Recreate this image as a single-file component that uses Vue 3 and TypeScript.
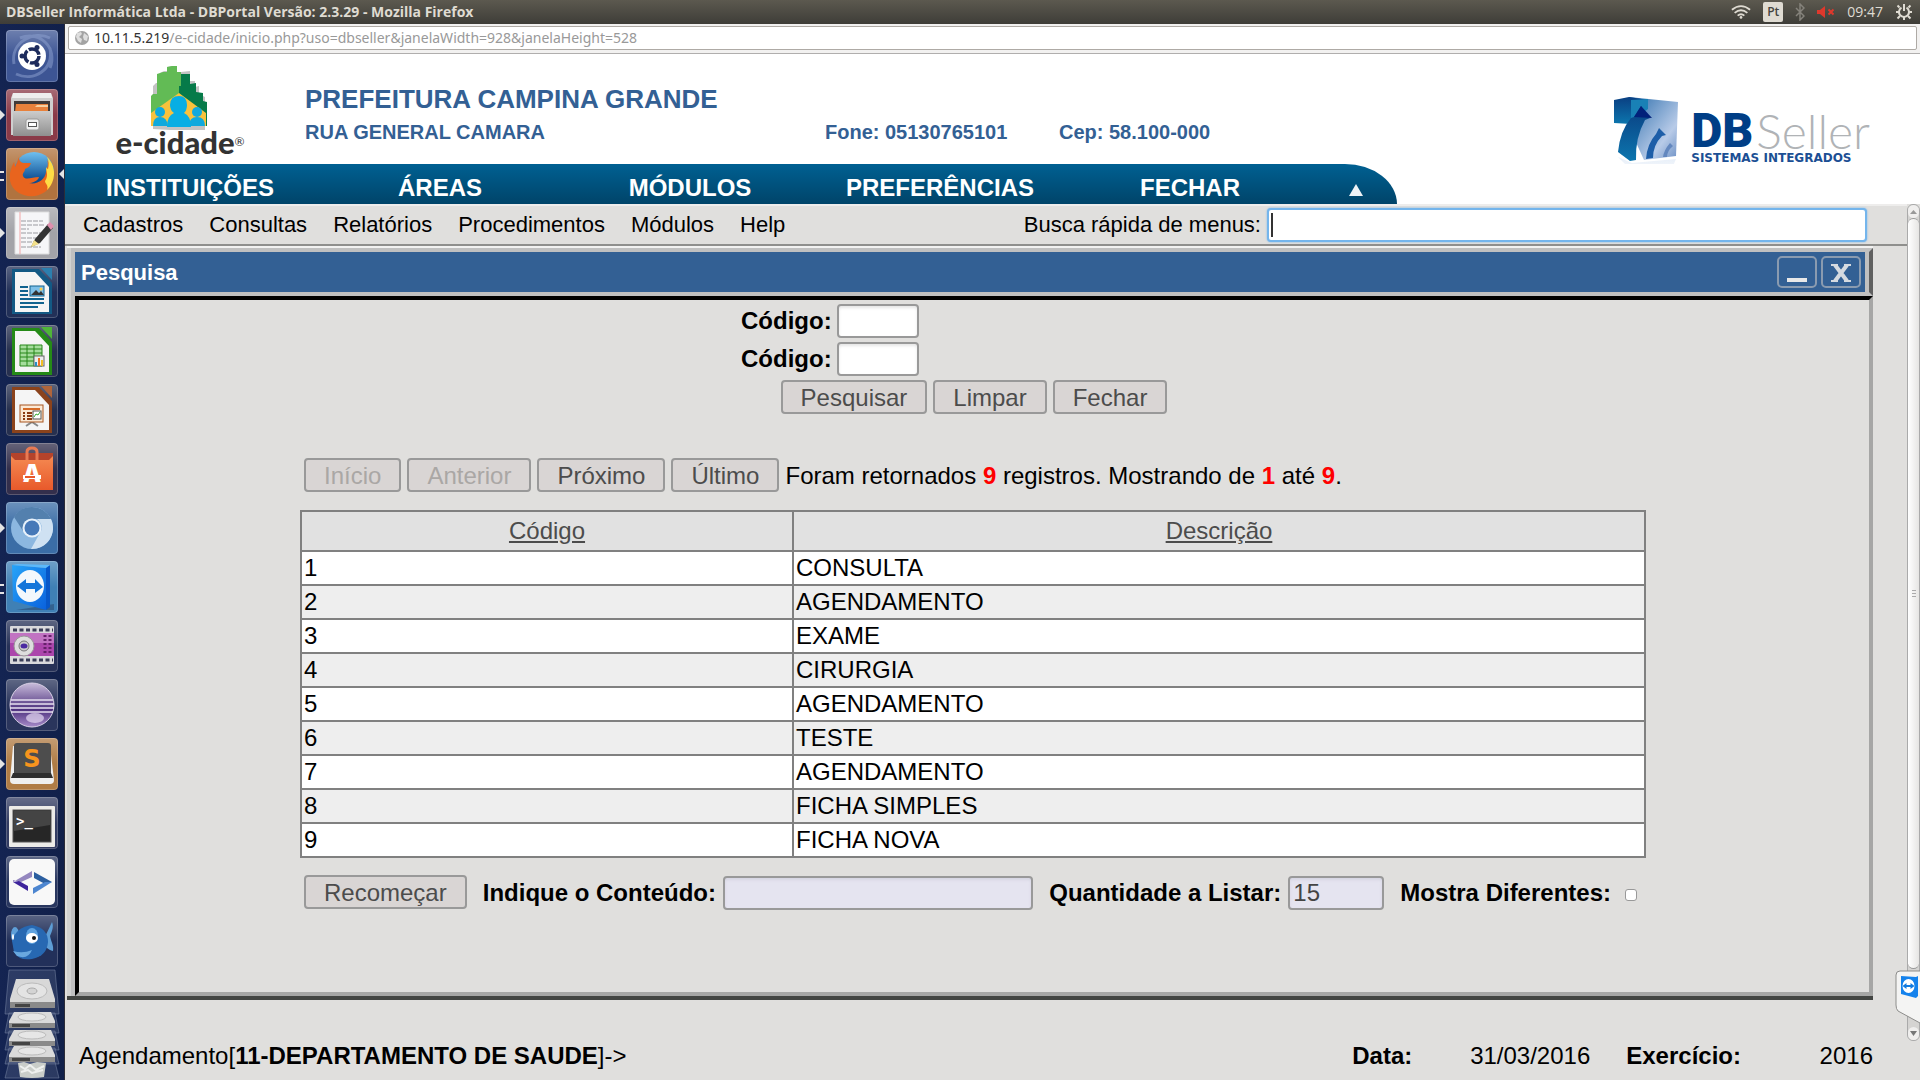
<script setup lang="ts">
import { nextTick, onMounted, ref } from 'vue'

interface Registro {
  codigo: number
  descricao: string
}

interface AppIcon {
  id: string
  label: string
  background: string
  windows: number
  active?: boolean
}

const areas: string[] = ['INSTITUIÇÕES', 'ÁREAS', 'MÓDULOS', 'PREFERÊNCIAS', 'FECHAR']
const menus: string[] = ['Cadastros', 'Consultas', 'Relatórios', 'Procedimentos', 'Módulos', 'Help']

const registros: Registro[] = [
  { codigo: 1, descricao: 'CONSULTA' },
  { codigo: 2, descricao: 'AGENDAMENTO' },
  { codigo: 3, descricao: 'EXAME' },
  { codigo: 4, descricao: 'CIRURGIA' },
  { codigo: 5, descricao: 'AGENDAMENTO' },
  { codigo: 6, descricao: 'TESTE' },
  { codigo: 7, descricao: 'AGENDAMENTO' },
  { codigo: 8, descricao: 'FICHA SIMPLES' },
  { codigo: 9, descricao: 'FICHA NOVA' },
]

const apps: AppIcon[] = [
  { id: 'dash', label: 'Início', background: '#3d5594', windows: 0 },
  { id: 'files', label: 'Arquivos', background: '#8a3a48', windows: 1 },
  { id: 'firefox', label: 'Firefox', background: '#b0733f', windows: 2, active: true },
  { id: 'gedit', label: 'Editor de texto', background: '#a3a3a8', windows: 1 },
  { id: 'writer', label: 'Writer', background: '#223058', windows: 0 },
  { id: 'calc', label: 'Calc', background: '#27304f', windows: 0 },
  { id: 'impress', label: 'Impress', background: '#27304f', windows: 0 },
  { id: 'software', label: 'Central de programas', background: '#332f4c', windows: 0 },
  { id: 'chromium', label: 'Chromium', background: '#3b6da6', windows: 1 },
  { id: 'teamviewer', label: 'TeamViewer', background: '#3f80b5', windows: 2 },
  { id: 'video', label: 'Gravador', background: '#273258', windows: 0 },
  { id: 'eclipse', label: 'Eclipse', background: '#2a355c', windows: 0 },
  { id: 'sublime', label: 'Sublime', background: '#b07c45', windows: 1 },
  { id: 'terminal', label: 'Terminal', background: '#333c62', windows: 0 },
  { id: 'code', label: 'Editor', background: '#28365f', windows: 0 },
  { id: 'fish', label: 'Bluefish', background: '#22305a', windows: 0 },
]

const busca = ref('')
const conteudo = ref('')
const quantidade = ref('15')
const diferentes = ref(false)
const campoBusca = ref<HTMLInputElement | null>(null)

onMounted(async () => {
  await nextTick()
  campoBusca.value?.focus()
})
</script>

<template>
  <div class="desktop">
    <header class="panel">
      <span class="panel-title">DBSeller Informática Ltda - DBPortal Versão: 2.3.29 - Mozilla Firefox</span>
      <div class="indicators">
        <svg width="20" height="16" viewBox="0 0 22 16" fill="none" stroke="#dfdbd2" stroke-width="2">
          <path d="M1 5.500Q11-2.500 21 5.500M4 9Q11 3 18 9M7.300 12Q11 9 14.700 12" />
          <circle cx="11" cy="14" r="1.500" fill="#dfdbd2" stroke="none" />
        </svg>
        <span class="keyboard">Pt</span>
        <svg width="10" height="18" viewBox="0 0 10 18" fill="none" stroke="#85827b" stroke-width="1.500">
          <path d="M1 5l8 8-4 4V1l4 4-8 8" />
        </svg>
        <svg width="18" height="14" viewBox="0 0 18 14">
          <path d="M0 5h3l5-4v12L3 9H0z" fill="#df382c" />
          <path d="M11.500 4.500l5 5m0-5l-5 5" stroke="#df382c" stroke-width="2" />
        </svg>
        <span class="clock">09:47</span>
        <svg width="18" height="18" viewBox="0 0 18 18" fill="none" stroke="#dfdbd2" stroke-width="2">
          <path d="M6.500 4.600a5 5 0 1 0 5 0" />
          <path d="M9 1v7" />
          <path d="M4.500 4.500l-2-2M13.500 4.500l2-2M4 9H1M14 9h3M5 13l-2.500 2.500M13 13l2.500 2.500M9 14v3" />
        </svg>
      </div>
    </header>

    <div class="screen">
      <nav class="launcher" aria-label="Lançador">
        <button
          v-for="app in apps"
          :key="app.id"
          type="button"
          class="tile"
          :class="{ one: app.windows === 1, two: app.windows === 2 }"
          :style="{ backgroundColor: app.background }"
          :aria-label="app.label"
        >
          <svg v-if="app.id === 'dash'" viewBox="0 0 52 52">
            <path d="M8 34C4 12 28 0 44 8M14 8C34 0 52 18 44 38M44 18C48 40 28 52 10 44" fill="none" stroke="#8fa3d2" stroke-width="3" opacity=".5" />
            <circle cx="26" cy="26" r="14" fill="#fff" />
            <circle cx="26" cy="26" r="7" fill="none" stroke="#1d2b5c" stroke-width="3.500" stroke-dasharray="13 1.700" />
            <circle cx="16" cy="26" r="2.500" fill="#1d2b5c" /><circle cx="31" cy="17.500" r="2.500" fill="#1d2b5c" /><circle cx="31" cy="34.500" r="2.500" fill="#1d2b5c" />
          </svg>
          <svg v-else-if="app.id === 'files'" viewBox="0 0 52 52">
            <path d="M7 4h38l2 5v37H5V9z" fill="#cfcfcf" /><path d="M7 4h38l1 5H6z" fill="#eee" />
            <path d="M8 12h36v11H8z" fill="#403a38" /><path d="M10 15h32v8H9z" fill="#e8813b" /><path d="M9 18h20l2-2h11v2H9z" fill="#f7d0a0" />
            <path d="M7 22h38v25H7z" fill="url(#metal)" /><rect x="20" y="30" width="13" height="11" rx="2" fill="#eee" stroke="#999" />
            <rect x="22.500" y="33.500" width="8" height="4" fill="#fff" stroke="#555" />
          </svg>
          <svg v-else-if="app.id === 'firefox'" viewBox="0 0 52 52">
            <circle cx="28" cy="24" r="20" fill="url(#globe)" />
            <path d="M41 12c9 10 8 25-2 32-12 8-29 4-34-8C2 28 5 20 8 14l1 5 4-10c0 4 2 6 6 6h6c-1 4-4 5-6 6 0 3-3 4-2 7 2 5 9 1 16 1-1 4-7 6-10 6 8 2 16-3 17-11 1-4 3-8 1-12z" fill="#e8641e" />
            <path d="M41 9c10 9 9 25 0 33 2-5-2-6-2-9 4-6 1-9 1-14 1 2 2 2 2 2 1-4 1-8-1-12z" fill="#ffdc45" />
          </svg>
          <svg v-else-if="app.id === 'gedit'" viewBox="0 0 52 52">
            <path d="M9 5h34v42H9z" fill="#f6f6f8" stroke="#ddd" /><path d="M14 5v42" stroke="#f2a6a6" />
            <path d="M15 14h22M15 18h24M15 22h8M15 26h20M15 31h20M15 35h14M15 40h20" stroke="#9a9aa0" stroke-dasharray="5 1" />
            <path d="M25 40l4-8 13-15 5 4-13 15z" fill="#333" /><path d="M25 40l3-7 5 4z" fill="#f3e08a" /><path d="M41 18l3-3 4 4-3 4z" fill="#df8fae" />
          </svg>
          <svg v-else-if="app.id === 'writer'" viewBox="0 0 52 52">
            <path d="M35 2h11v12z" fill="#2c7fae" /><path d="M6 3h27l13 14v31H6z" fill="#135984" /><path d="M9 6h20l14 15v25H9z" fill="#f5f5f5" />
            <path d="M14 21h8M14 25h8M14 29h8M14 33h24M14 37h24M14 41h18" stroke="#11638f" stroke-width="2" />
            <rect x="24" y="20" width="14" height="10" fill="#7ec0e8" stroke="#11638f" /><path d="M25 29l5-5 3 3 2-2 3 4z" fill="#333" /><circle cx="35" cy="23" r="1.500" fill="#fc4" />
          </svg>
          <svg v-else-if="app.id === 'calc'" viewBox="0 0 52 52">
            <path d="M35 2h11v12z" fill="#4fb538" /><path d="M6 3h27l13 14v33H6z" fill="#258a17" /><path d="M9 6h20l14 15v26H9z" fill="#f5f5f5" />
            <path d="M14 20h22v21H14z" fill="#a5dd9c" /><path d="M14 20h22v21H14zM14 24h22M14 28h22M14 32h22M14 36h22M21 20v21M28 20v21" fill="none" stroke="#268718" />
            <rect x="28" y="31" width="10" height="10" fill="#eee" stroke="#666" /><path d="M29 37h2v4h-2z" fill="#2b8dc4" /><path d="M32 33h2v8h-2z" fill="#ee7026" /><path d="M35 35h2v6h-2z" fill="#f2bf25" />
          </svg>
          <svg v-else-if="app.id === 'impress'" viewBox="0 0 52 52">
            <path d="M35 2h11v12z" fill="#b0653b" /><path d="M6 3h27l13 14v32H6z" fill="#8b431c" /><path d="M9 6h20l14 15v25H9z" fill="#f5f5f5" />
            <path d="M20 42l6-4 6 4" fill="none" stroke="#888" stroke-width="2" /><rect x="14" y="21" width="23" height="17" fill="#fbe9d5" stroke="#a8551f" />
            <path d="M17 25h17" stroke="#d66b27" stroke-width="2" /><path d="M17 29h2m2 0h5M17 32h2m2 0h5M17 35h2m2 0h5" stroke="#8b3b12" stroke-width="2" />
            <rect x="27" y="27" width="8" height="8" fill="#fff" stroke="#555" /><path d="M28 33l2-3 2 1 2-3" fill="none" stroke="#3a3" />
          </svg>
          <svg v-else-if="app.id === 'software'" viewBox="0 0 52 52">
            <path d="M5 10h42v8H5z" fill="#b5432b" /><path d="M5 13l4 4h34l4-4v34H5z" fill="url(#bag)" />
            <path d="M21 17V9q0-4 5-4t5 4v8" fill="none" stroke="#e87a54" stroke-width="3" />
            <text x="26" y="39" text-anchor="middle" font-family="Open Sans, sans-serif" font-weight="800" font-size="24" fill="#fff">A</text>
            <path d="M17 34h18" stroke="#fff" stroke-width="4" /><path d="M19 34h10" stroke="#e8592b" stroke-width="2" />
          </svg>
          <svg v-else-if="app.id === 'chromium'" viewBox="0 0 52 52">
            <circle cx="26" cy="26" r="21" fill="#8cb7e0" /><path d="M26 5a21 21 0 0 1 19 12H26c-8 0-10 7-9 12L8 15A21 21 0 0 1 26 5z" fill="#5380ae" />
            <path d="M45 17a21 21 0 0 1-20 30l10-18c2-4 0-9-4-12z" fill="#cfe1f2" /><circle cx="26" cy="26" r="9.500" fill="#e8f1fa" /><circle cx="26" cy="26" r="7.500" fill="#4779b8" />
          </svg>
          <svg v-else-if="app.id === 'teamviewer'" viewBox="0 0 52 52">
            <path d="M10 49h38v-6z" fill="#235" opacity=".4" /><path d="M40 6l4-2v42l-4 3z" fill="#0757c8" /><path d="M6 4l34 3v42L7 40z" fill="url(#team)" /><path d="M6 4l5-1 33 1-4 3z" fill="#5cb9fa" />
            <ellipse cx="24" cy="25" rx="14" ry="16" fill="#f3f8fc" /><path d="M11 25l9-7v4h9v-4l8 8-8 6v-4h-9v4z" fill="#1476da" />
          </svg>
          <svg v-else-if="app.id === 'video'" viewBox="0 0 52 52">
            <rect x="4" y="6" width="44" height="38" rx="1" fill="#d9d9dc" /><path d="M4 13h44v23H4z" fill="#ac46ac" /><path d="M4 13h44v10H4z" fill="#c173c2" />
            <path d="M7 10h40M7 40h40" stroke="#3a3e58" stroke-width="3" stroke-dasharray="4 2.500" />
            <path d="M39 15v20M44 15v20" stroke="#66206a" stroke-width="3" stroke-dasharray="2 2" />
            <circle cx="18" cy="26" r="10" fill="#ddd" stroke="#999" /><circle cx="18" cy="26" r="5" fill="#ccc" stroke="#777" /><ellipse cx="18" cy="26" rx="3.500" ry="2.500" fill="#4a2aa0" />
          </svg>
          <svg v-else-if="app.id === 'eclipse'" viewBox="0 0 52 52">
            <circle cx="26" cy="26" r="22" fill="url(#orb)" stroke="#d9d0e6" />
            <path d="M5 21h42M4 25h44M4 29h44M5 33h42" stroke="#e6dff0" stroke-width="1.500" /><ellipse cx="29" cy="39" rx="9" ry="5" fill="#e5daf2" opacity=".7" />
          </svg>
          <svg v-else-if="app.id === 'sublime'" viewBox="0 0 52 52">
            <path d="M7 8h37l4 34q0 4-4 4H8q-4 0-4-4z" fill="#efefef" /><rect x="8" y="5" width="37" height="35" rx="3" fill="#4d4d4d" /><path d="M7 35h38l2 5H5z" fill="#2e2e2e" />
            <text x="26" y="29" text-anchor="middle" font-family="DejaVu Sans, sans-serif" font-weight="700" font-size="24" fill="#f7941d">S</text>
          </svg>
          <svg v-else-if="app.id === 'terminal'" viewBox="0 0 52 52">
            <rect x="3" y="9" width="46" height="41" rx="1" fill="#ecebe8" /><rect x="7" y="13" width="38" height="32" fill="#262626" stroke="#555" /><path d="M8 14h36v14L8 34z" fill="#444" />
            <text x="10" y="29" font-family="DejaVu Sans Mono, monospace" font-weight="700" font-size="14" fill="#fff">&gt;_</text>
          </svg>
          <svg v-else-if="app.id === 'code'" viewBox="0 0 52 52">
            <rect x="3" y="3" width="46" height="46" rx="5" fill="#f8f8f8" /><path d="M26 15v6l-11 5-8-2v2z" fill="#9487bf" /><path d="M7 26l15 9v-5l-9-5z" fill="#3e249c" />
            <path d="M28 16l18 10-7 2-11-6z" fill="#2c5fa0" /><path d="M46 26L27 38v-6l12-6z" fill="#4d86d0" />
          </svg>
          <svg v-else viewBox="0 0 52 52">
            <path d="M38 24l8-17c2 5 0 9-2 14 1 6 4 9 3 15-5-1-8-5-11-8z" fill="#5d9dd5" /><ellipse cx="9" cy="20" rx="4" ry="8" fill="#5e9fd8" />
            <path d="M6 26q4-14 20-16 16 3 16 17-1 14-16 17-13 2-18-7z" fill="#2768b2" /><path d="M7 36q10 3 19-1-4 10-15 6z" fill="#69a8df" />
            <ellipse cx="26" cy="21" rx="6" ry="8" fill="#5fa2df" /><ellipse cx="26" cy="23" rx="6" ry="5" fill="#fff" /><circle cx="28" cy="23" r="2" fill="#111" /><ellipse cx="7" cy="22" rx="1" ry="3" fill="#fff" />
          </svg>
          <span v-if="app.active" class="active-mark"></span>
        </button>
        <svg class="stack" viewBox="0 0 65 111">
          <g fill="#5d6b8d" fill-opacity=".35" stroke="#7c89a8" stroke-opacity=".5">
            <path d="M9 1h46l4 44H5z" /><path d="M9 44h46l4 20H5z" /><path d="M9 62h46l4 19H5z" /><path d="M9 79h46l4 16H5z" /><path d="M9 93h46l4 16H5z" />
          </g>
          <path d="M16 10h33l6 20v4H10v-4z" fill="#d8d8d8" /><path d="M10 33h45v6H10z" fill="#8a8a8a" /><path d="M15 35h15v3H15z" fill="#444" />
          <ellipse cx="32" cy="22" rx="15" ry="8" fill="#e4e4e4" stroke="#bbb" /><ellipse cx="32" cy="22" rx="5" ry="3" fill="#d4d4d4" stroke="#aaa" />
          <g v-for="y in [43, 61, 77]" :key="y" :transform="`translate(0 ${y})`">
            <path d="M14 0h37l4 9v2H9V9z" fill="#dadada" /><path d="M9 11h46v5H9z" fill="#8a8a8a" /><path d="M12 12h18v3H12z" fill="#444" />
            <ellipse cx="32" cy="5" rx="14" ry="4" fill="#e6e6e6" stroke="#bbb" />
          </g>
          <path d="M18 94l6-1 6 2 7-2 9 1-2 14q-12 2-24 0z" fill="#c9cdc9" />
          <path d="M20 97l5 3 5-4 6 5 8-4M21 103l7-2 4 3 11-3" fill="none" stroke="#eef0ee" stroke-width="2" />
        </svg>
        <svg class="defs" aria-hidden="true">
          <defs>
            <linearGradient id="metal" x2="0" y2="1"><stop stop-color="#ccc" /><stop offset="1" stop-color="#8f8f8f" /></linearGradient>
            <linearGradient id="globe" x2="0" y2="1"><stop stop-color="#6fc0f0" /><stop offset=".7" stop-color="#0c4d92" /></linearGradient>
            <linearGradient id="bag" x2="0" y2="1"><stop stop-color="#f58a52" /><stop offset="1" stop-color="#e8592b" /></linearGradient>
            <linearGradient id="team" x2="1" y2="1"><stop stop-color="#27a4f8" /><stop offset="1" stop-color="#0a62dd" /></linearGradient>
            <linearGradient id="orb" x2="0" y2="1"><stop stop-color="#c9bddb" /><stop offset=".6" stop-color="#4c2f7d" /><stop offset="1" stop-color="#a78cc9" /></linearGradient>
            <linearGradient id="cube" x2="1" y2="1"><stop stop-color="#2a6cab" /><stop offset=".7" stop-color="#b8cbe8" /><stop offset="1" stop-color="#6b8fc4" /></linearGradient>
            <linearGradient id="edge" x2="0" y2="1"><stop stop-color="#0a3f82" /><stop offset="1" stop-color="#0c76ae" /></linearGradient>
            <linearGradient id="reflex" x2="0" y2="1"><stop stop-color="#dce7f5" /><stop offset="1" stop-color="#fff" /></linearGradient>
          </defs>
        </svg>
      </nav>

      <div class="browser">
        <div class="addressbar">
          <div class="address">
            <svg width="16" height="16" viewBox="0 0 16 16">
              <circle cx="8" cy="8" r="7" fill="#a3a3a3" />
              <path d="M3 3l4-1 1 2-3 3 3 2-1 4-3-2-2-4zM10 3l4 3-1 5-3-1-1-3z" fill="#dedede" />
            </svg>
            <span><span class="host">10.11.5.219</span>/e-cidade/inicio.php?uso=dbseller&amp;janelaWidth=928&amp;janelaHeight=528</span>
          </div>
        </div>

        <div class="banner">
          <div class="ecidade">
            <svg width="60" height="64" viewBox="0 0 60 64">
              <path d="M3 63V20l3-3h4V7l4-2h3V1l5-1h4v4l2 10 3-8 9-1v10h5v6l4-1v8l6 3v35z" fill="#888" opacity=".5" />
              <path d="M1 60V30l2-2h4V8l6-2h4V1l5-1h5v6h4v54z" fill="#62bb55" />
              <path d="M29 60V20h2V8h9v10l6-1v9l7 1v8l4 1v24z" fill="#067a49" />
              <path d="M1 60V47l28-20 27 20v13z" fill="#f9c23c" />
              <g fill="#0fa9dd"><circle cx="10" cy="46" r="5" /><path d="M3 60q0-9 7-9t8 9z" /><circle cx="47" cy="46" r="5" /><path d="M39 60q0-9 8-9t8 9z" /></g>
              <path d="M17 61q0-11 7-14-4-3-4-8 0-9 9-9 8 0 8 9 0 5-3 8 7 3 7 14z" fill="#08aee4" />
            </svg>
            <div class="ecidade-name">e-cidade<sup>®</sup></div>
          </div>
          <div class="entity">
            <div class="entity-name">PREFEITURA CAMPINA GRANDE</div>
            <div class="entity-data">
              <span class="street">RUA GENERAL CAMARA</span>
              <span class="phone">Fone: 05130765101</span>
              <span>Cep: 58.100-000</span>
            </div>
          </div>
          <div class="dbseller">
            <svg width="66" height="84" viewBox="0 0 66 84">
              <path d="M4 60l14 6 44-4-6 14-30 6z" fill="url(#reflex)" opacity=".7" />
              <path d="M15 0l49 5-2 54-32 4L15 30z" fill="url(#cube)" />
              <path d="M0 3l15-3 19 3-17 5v19L0 26z" fill="url(#edge)" /><path d="M17 3l17-1v10l-11 8-6 6z" fill="#1981b6" />
              <path d="M27 9l9 12-5 2q-10 18-9 40l-6 1-12-9Q6 34 17 21l3-1z" fill="url(#edge)" />
              <path d="M27 9l11 12-18-1z" fill="#02217a" />
              <path d="M45 31l7 7-4 1q-9 9-9 22l-7 1q1-15 10-25z" fill="#1e5ea8" /><path d="M56 46l3 3q-6 5-6 11h-4q1-7 7-14z" fill="#6387be" />
            </svg>
            <div class="dbseller-name">
              <div class="wordmark"><b>DB</b><span>Seller</span></div>
              <div class="tagline">SISTEMAS INTEGRADOS</div>
            </div>
          </div>
        </div>

        <nav class="areas">
          <div class="areas-bar">
            <a v-for="area in areas" :key="area" href="#">{{ area }}</a>
            <button type="button" class="collapse" aria-label="Recolher">
              <svg width="14" height="12" viewBox="0 0 14 12"><path d="M7 0l7 12H0z" fill="#eef3f6" /></svg>
            </button>
          </div>
        </nav>

        <div class="workspace">
          <div class="page">
            <div class="menubar">
              <nav class="menus"><a v-for="menu in menus" :key="menu" href="#">{{ menu }}</a></nav>
              <label class="quick-label" for="busca">Busca rápida de menus:</label>
              <div class="quick">
                <input id="busca" ref="campoBusca" v-model="busca" type="text" autocomplete="off" />
                <span v-if="!busca" class="caret"></span>
              </div>
            </div>

            <section class="window">
              <header class="titlebar">
                <h1>Pesquisa</h1>
                <button type="button" aria-label="Minimizar">
                  <svg width="40" height="32" viewBox="0 0 40 32"><rect x="1" y="1" width="38" height="30" rx="4" fill="none" stroke="#8a9bb0" stroke-width="2" /><path d="M10 24h20" stroke="#e8e8e8" stroke-width="4" /></svg>
                </button>
                <button type="button" aria-label="Fechar janela">
                  <svg width="40" height="32" viewBox="0 0 40 32"><rect x="1" y="1" width="38" height="30" rx="4" fill="none" stroke="#8a9bb0" stroke-width="2" /><path d="M14 9l12 16M26 9L14 25" stroke="#d5dae0" stroke-width="4" /><path d="M10 9h7M23 9h7M10 25h7M23 25h7" stroke="#d5dae0" stroke-width="2" /></svg>
                </button>
              </header>
              <div class="content">
                <form class="filters" @submit.prevent>
                  <div class="field"><label for="codigo1">Código:</label><input id="codigo1" type="text" /></div>
                  <div class="field"><label for="codigo2">Código:</label><input id="codigo2" type="text" /></div>
                  <div class="actions">
                    <button type="submit" class="btn">Pesquisar</button>
                    <button type="reset" class="btn">Limpar</button>
                    <button type="button" class="btn">Fechar</button>
                  </div>
                </form>

                <div class="results">
                  <div class="pager">
                    <button type="button" class="btn" disabled>Início</button>
                    <button type="button" class="btn" disabled>Anterior</button>
                    <button type="button" class="btn">Próximo</button>
                    <button type="button" class="btn">Último</button>
                    <span class="summary">Foram retornados <b>9</b> registros. Mostrando de <b>1</b> até <b>9</b>.</span>
                  </div>
                  <table>
                    <colgroup><col class="col-code" /><col /></colgroup>
                    <thead>
                      <tr><th scope="col"><a href="#">Código</a></th><th scope="col"><a href="#">Descrição</a></th></tr>
                    </thead>
                    <tbody>
                      <tr v-for="r in registros" :key="r.codigo"><td>{{ r.codigo }}</td><td>{{ r.descricao }}</td></tr>
                    </tbody>
                  </table>
                  <div class="listing">
                    <button type="button" class="btn">Recomeçar</button>
                    <div class="option grow"><label for="conteudo">Indique o Conteúdo:</label><input id="conteudo" v-model="conteudo" type="text" /></div>
                    <div class="option"><label for="quantidade">Quantidade a Listar:</label><input id="quantidade" v-model="quantidade" class="amount" type="text" /></div>
                    <div class="option"><label for="diferentes">Mostra Diferentes:</label><input id="diferentes" v-model="diferentes" type="checkbox" /></div>
                  </div>
                </div>
              </div>
            </section>

            <footer class="status">
              <span class="path">Agendamento[<b>11-DEPARTAMENTO DE SAUDE</b>]-&gt;</span>
              <b>Data:</b><span class="date">31/03/2016</span>
              <b>Exercício:</b><span class="year">2016</span>
            </footer>
          </div>

          <div class="rail" aria-hidden="true">
            <div class="rail-end"><svg width="7" height="4" viewBox="0 0 7 4"><path d="M0 4l3.500-4L7 4z" fill="#999" /></svg></div>
            <div class="thumb"><i></i><i></i><i></i></div>
            <div class="rail-track"></div>
            <div class="rail-end"><svg width="7" height="5" viewBox="0 0 7 5"><path d="M0 0h7L3.500 5z" fill="#777" /></svg></div>
          </div>
          <svg class="tag" width="25" height="54" viewBox="0 0 25 54">
            <path d="M25 1H5Q1 1 1 5v30q0 4 2 6l22 12" fill="#f4f4f3" stroke="#8d8d8b" />
            <path d="M6 6l15 1 2-1v20l-2 2-15-4z" fill="#1482ec" /><ellipse cx="13.500" cy="16" rx="6" ry="7" fill="#fff" /><path d="M7.500 16l4-3v2h4v-2l4 3-4 3v-2h-4v2z" fill="#137be0" />
          </svg>
        </div>
      </div>
    </div>
  </div>
</template>

<style>
body {
  margin: 0;
  background: #e0dfdd;
}
</style>

<style scoped>
* {
  box-sizing: border-box;
}
.desktop {
  display: flex;
  flex-direction: column;
  height: 100vh;
  overflow: hidden;
  color: #000;
  font: 24px/28px 'Liberation Sans', Arial, sans-serif;
}
a {
  color: inherit;
  text-decoration: none;
}
button {
  padding: 0;
  border: 0;
  background: none;
  font: inherit;
}
svg {
  display: block;
  flex: none;
}
.panel {
  flex: none;
  display: flex;
  align-items: center;
  justify-content: space-between;
  height: 24px;
  padding: 0 7px 0 6px;
  background: linear-gradient(#5c594f, #3e3d38);
  color: #dfdbd2;
  font: 14px/24px 'Open Sans', 'Noto Sans', sans-serif;
}
.panel-title {
  font-weight: 700;
}
.indicators {
  display: flex;
  align-items: center;
  gap: 12px;
}
.keyboard {
  width: 20px;
  border-radius: 2px;
  background: #dfdbd2;
  color: #45443e;
  font-size: 12px;
  font-weight: 600;
  line-height: 20px;
  text-align: center;
}
.screen {
  flex: 1;
  display: flex;
  min-height: 0;
}
.launcher {
  flex: none;
  display: flex;
  flex-direction: column;
  align-items: center;
  gap: 7px;
  width: 65px;
  padding-top: 6px;
  overflow: hidden;
  border-right: 1px solid #2c2c38;
  background: linear-gradient(90deg, #142452, #11204a);
}
.tile {
  position: relative;
  flex: none;
  width: 52px;
  height: 52px;
  border-radius: 4px;
  background-image: linear-gradient(rgba(255, 255, 255, 0.25), rgba(255, 255, 255, 0) 50%);
  box-shadow: inset 0 0 0 1px rgba(255, 255, 255, 0.2);
}
.one::before,
.two::before {
  content: '';
  position: absolute;
  top: 21px;
  left: -6px;
  border: 5px solid transparent;
  border-left-color: #e4e4e4;
  border-right: 0;
}
.two::before {
  top: 23px;
  width: 4px;
  height: 6px;
  border: solid #e4e4e4;
  border-width: 2px 0;
}
.active-mark {
  position: absolute;
  top: 21px;
  right: -6px;
  border: 5px solid transparent;
  border-right-color: #e4e4e4;
  border-left: 0;
}
.stack {
  width: 65px;
  height: 111px;
  margin-top: -5px;
}
.defs {
  width: 0;
  height: 0;
}
.browser {
  flex: 1;
  display: flex;
  flex-direction: column;
  min-width: 0;
}
.addressbar {
  flex: none;
  height: 30px;
  padding: 2px 3px;
  border-bottom: 1px solid #b0aead;
  background: #f2f1f0;
}
.address {
  display: flex;
  align-items: center;
  gap: 4px;
  height: 24px;
  padding-left: 5px;
  border: 1px solid #aeaaa5;
  border-radius: 2px;
  background: #fff;
  color: #999;
  font: 14px/20px 'Noto Sans', 'Open Sans', sans-serif;
}
.host {
  color: #333;
}
.banner {
  flex: none;
  display: flex;
  height: 110px;
  padding-right: 50px;
  background: #fff;
  color: #336094;
  font-weight: 700;
}
.ecidade {
  display: flex;
  flex-direction: column;
  align-items: center;
  width: 240px;
  padding: 12px 10px 0 0;
}
.ecidade-name {
  margin-top: -3px;
  color: #333;
  font: 900 31px/30px Lato, sans-serif;
}
.ecidade-name sup {
  font-size: 12px;
  font-weight: 400;
  line-height: 12px;
  vertical-align: 8px;
}
.entity {
  flex: 1;
  padding-top: 30px;
}
.entity-name {
  font-size: 26px;
  line-height: 30px;
}
.entity-data {
  display: flex;
  padding-top: 6px;
  font-size: 20px;
  line-height: 24px;
}
.street {
  width: 520px;
}
.phone {
  width: 234px;
}
.dbseller {
  display: flex;
  gap: 11px;
  padding-top: 43px;
}
.dbseller-name {
  display: flex;
  flex-direction: column;
}
.wordmark {
  display: flex;
  gap: 3px;
  height: 55px;
  color: #b0b3b6;
  font: 300 48px/68px Lato, sans-serif;
}
.wordmark b {
  color: #003e86;
  font: 900 48px/68px Roboto, sans-serif;
}
.tagline {
  color: #1c4f94;
  font: 700 12px/12px 'DejaVu Sans', sans-serif;
}
.areas {
  flex: none;
  background: #fff;
}
.areas-bar {
  display: flex;
  align-items: center;
  width: 1332px;
  max-width: 100%;
  height: 40px;
  border-top-right-radius: 52px 40px;
  background: linear-gradient(#006092, #004469);
  color: #fff;
  font-weight: 700;
}
.areas-bar a {
  width: 250px;
  padding-top: 8px;
  text-align: center;
}
.collapse {
  display: flex;
  flex: 1;
  justify-content: center;
  padding-top: 12px;
}
.workspace {
  position: relative;
  flex: 1;
  display: flex;
  min-height: 0;
  background: #e0dfdd;
}
.page {
  flex: 1;
  display: flex;
  flex-direction: column;
  min-width: 0;
}
.menubar {
  display: flex;
  align-items: center;
  height: 42px;
  padding: 0 40px 0 18px;
  border-top: 2px solid #eeedec;
  border-bottom: 2px solid #8f8f8d;
  font-size: 22px;
}
.menus {
  display: flex;
  flex: 1;
  gap: 26px;
}
.quick-label {
  margin-right: 6px;
}
.quick {
  position: relative;
  width: 600px;
}
.quick input {
  display: block;
  width: 100%;
  height: 34px;
  padding: 0 4px;
  border: 2px solid #74b5ec;
  border-radius: 4px;
  outline: 0;
  background: #fff;
  box-shadow: 0 0 2px #74b5ec;
  caret-color: transparent;
  font: inherit;
}
.caret {
  position: absolute;
  top: 5px;
  left: 4px;
  width: 2px;
  height: 24px;
  background: #333;
}
.window {
  flex: 1;
  display: flex;
  flex-direction: column;
  margin: 0 34px 0 2px;
  border-top: 2px solid #f2f2f1;
  border-bottom: 4px solid #434542;
  background: linear-gradient(90deg, #d2d2d1 4px, #c0c0c0 4px 8px, #e0dfdd 8px);
}
.titlebar {
  display: flex;
  align-items: center;
  gap: 4px;
  height: 48px;
  margin-left: 4px;
  padding-right: 8px;
  border: 4px solid #c0c0c0;
  border-right-color: #606060;
  background: #336094;
  box-shadow: inset -4px 0 #c0c0c0;
  color: #fff;
}
.titlebar h1 {
  flex: 1;
  margin: 0;
  padding: 2px 0 0 6px;
  font-size: 22px;
  line-height: 28px;
}
.content {
  flex: 1;
  margin-left: 8px;
  padding-top: 4px;
  border: 4px solid #a6a6a5;
  border-top-color: #000;
  border-left-color: #000;
}
.filters {
  display: flex;
  flex-direction: column;
  align-items: center;
  gap: 4px;
}
.field {
  display: flex;
  align-items: center;
  gap: 5px;
  width: 466px;
  font-weight: 700;
}
.field input,
.option input[type='text'] {
  width: 82px;
  height: 34px;
  padding: 0 3px;
  border: 2px solid #999;
  border-radius: 4px;
  background: #fff;
  box-shadow: inset 0 2px 3px #e6e6e6;
  color: #444;
  font: inherit;
  font-weight: 400;
}
.actions,
.pager {
  display: flex;
  align-items: center;
  gap: 6px;
}
.btn {
  flex: none;
  height: 34px;
  padding: 2px 18px 0;
  border: 2px solid #999;
  border-radius: 4px;
  background: #d9d5d4;
  color: #4c4c4c;
  line-height: 28px;
}
.btn:disabled {
  color: #aaa7a5;
}
.results {
  padding: 44px 223px 0 221px;
}
.pager {
  padding-left: 4px;
}
.summary {
  padding-top: 2px;
}
.pager b {
  color: #f00;
}
table {
  width: 100%;
  margin-top: 18px;
  border-collapse: collapse;
  table-layout: fixed;
}
.col-code {
  width: 492px;
}
th,
td {
  height: 34px;
  padding: 0 2px;
  border: 2px solid #808080;
  text-align: left;
}
th {
  height: 40px;
  background: #e1e1e1;
  color: #4c4c4c;
  font-weight: 400;
  text-align: center;
}
th a {
  text-decoration: underline;
}
tbody tr {
  background: #fff;
}
tbody tr:nth-child(even) {
  background: #eee;
}
.listing {
  display: flex;
  align-items: center;
  gap: 16px;
  padding: 16px 9px 0 4px;
}
.option {
  display: flex;
  align-items: center;
  gap: 7px;
  padding-top: 2px;
  font-weight: 700;
}
.grow {
  flex: 1;
}
.option input[type='text'] {
  background: #e5e4f0;
  box-shadow: inset 0 2px 3px #d6d5e2;
}
.option.grow input {
  flex: 1;
  min-width: 0;
}
.option input.amount {
  width: 96px;
}
.option input[type='checkbox'] {
  appearance: none;
  width: 12px;
  height: 12px;
  margin: 4px 0 0 7px;
  border: 1px solid #999;
  border-radius: 3px;
  background: #fff;
}
.status {
  display: flex;
  align-items: center;
  height: 80px;
  padding: 32px 34px 0 14px;
}
.path {
  flex: 1;
}
.date {
  width: 214px;
  padding-right: 36px;
  text-align: right;
}
.year {
  width: 132px;
  text-align: right;
}
.rail {
  display: flex;
  flex-direction: column;
  width: 13px;
  margin-bottom: 39px;
  border: 1px solid #aaa;
  border-radius: 6px;
  background: #d5d4d2;
}
.rail-end {
  display: flex;
  align-items: center;
  justify-content: center;
  height: 13px;
  border-radius: 6px;
  background: #f0efee;
}
.thumb {
  flex: 1;
  display: flex;
  flex-direction: column;
  align-items: center;
  justify-content: center;
  gap: 2px;
  border: solid #999;
  border-width: 1px 0;
  border-radius: 6px;
  background: linear-gradient(90deg, #fff, #e6e5e3);
}
.thumb i {
  width: 4px;
  height: 1px;
  background: #aaa;
}
.rail-track {
  height: 58px;
}
.tag {
  position: absolute;
  right: 0;
  bottom: 56px;
}
</style>
